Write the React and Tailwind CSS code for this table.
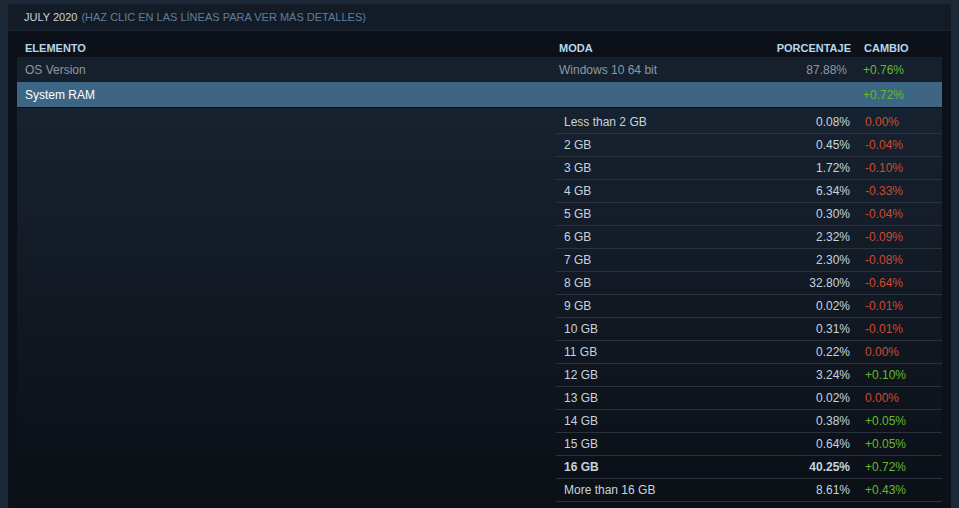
const rows = [
  ["Less than 2 GB", "0.08%", "0.00%"],
  ["2 GB", "0.45%", "-0.04%"],
  ["3 GB", "1.72%", "-0.10%"],
  ["4 GB", "6.34%", "-0.33%"],
  ["5 GB", "0.30%", "-0.04%"],
  ["6 GB", "2.32%", "-0.09%"],
  ["7 GB", "2.30%", "-0.08%"],
  ["8 GB", "32.80%", "-0.64%"],
  ["9 GB", "0.02%", "-0.01%"],
  ["10 GB", "0.31%", "-0.01%"],
  ["11 GB", "0.22%", "0.00%"],
  ["12 GB", "3.24%", "+0.10%"],
  ["13 GB", "0.02%", "0.00%"],
  ["14 GB", "0.38%", "+0.05%"],
  ["15 GB", "0.64%", "+0.05%"],
  ["16 GB", "40.25%", "+0.72%", true],
  ["More than 16 GB", "8.61%", "+0.43%"],
];

function changeColor(v) {
  return v.startsWith("+") ? "text-[#66b82c]" : "text-[#d0492c]";
}

export default function App() {
  return (
    <div className="w-[959px] h-[508px] overflow-hidden bg-[#1b2838] pt-1 px-2 font-['Liberation_Sans',Arial,sans-serif] text-[12px]">
      <div className="bg-[#0c1119] h-full flex flex-col">
        <div className="shrink-0 h-[27px] bg-[#131b26] flex items-center px-[16px] text-[11px] border-b border-[#1c2633]">
          <span className="text-[#c6d4df]">JULY 2020</span>
          <span className="text-[#5e7f9c] ml-1">(HAZ CLIC EN LAS LÍNEAS PARA VER MÁS DETALLES)</span>
        </div>
        <div className="flex-1 min-h-0 flex flex-col px-[9px] pt-[8px]">
          <div className="shrink-0 h-[18px] flex items-center text-[11px] font-bold text-[#b8d6ec]">
            <span className="w-[542px] pl-[8px]">ELEMENTO</span>
            <span className="flex-1">MODA</span>
            <span className="w-[95px] text-right">PORCENTAJE</span>
            <span className="w-[91px] pl-[13px]">CAMBIO</span>
          </div>
          <div className="shrink-0 h-[25px] flex items-center bg-[#16202c] text-[#8f98a0]">
            <span className="w-[542px] pl-[8px]">OS Version</span>
            <span className="flex-1">Windows 10 64 bit</span>
            <span className="w-[91px] text-right">87.88%</span>
            <span className="w-[95px] pl-[16px] text-[#66b82c]">+0.76%</span>
          </div>
          <div className="shrink-0 h-[26px] flex items-center bg-[#3d6685] border-b border-[#0c1119] text-white">
            <span className="w-[542px] pl-[8px]">System RAM</span>
            <span className="flex-1"></span>
            <span className="w-[95px] pl-[16px] text-[#66b82c]">+0.72%</span>
          </div>
          <div className="flex-1 bg-gradient-to-b from-[#172230] to-[#0b0f16] pl-[539px] pt-[3px]">
            {rows.map(([name, pct, chg, bold]) => (
              <div
                key={name}
                className={`h-[23px] flex items-center border-b border-[#29323d] text-[#c6d4df] ${bold ? "font-bold" : ""}`}
              >
                <span className="flex-1 pl-[8px]">{name}</span>
                <span className="w-[80px] text-right">{pct}</span>
                <span className={`w-[92px] pl-[15px] font-normal ${changeColor(chg)}`}>{chg}</span>
              </div>
            ))}
          </div>
        </div>
      </div>
    </div>
  );
}
